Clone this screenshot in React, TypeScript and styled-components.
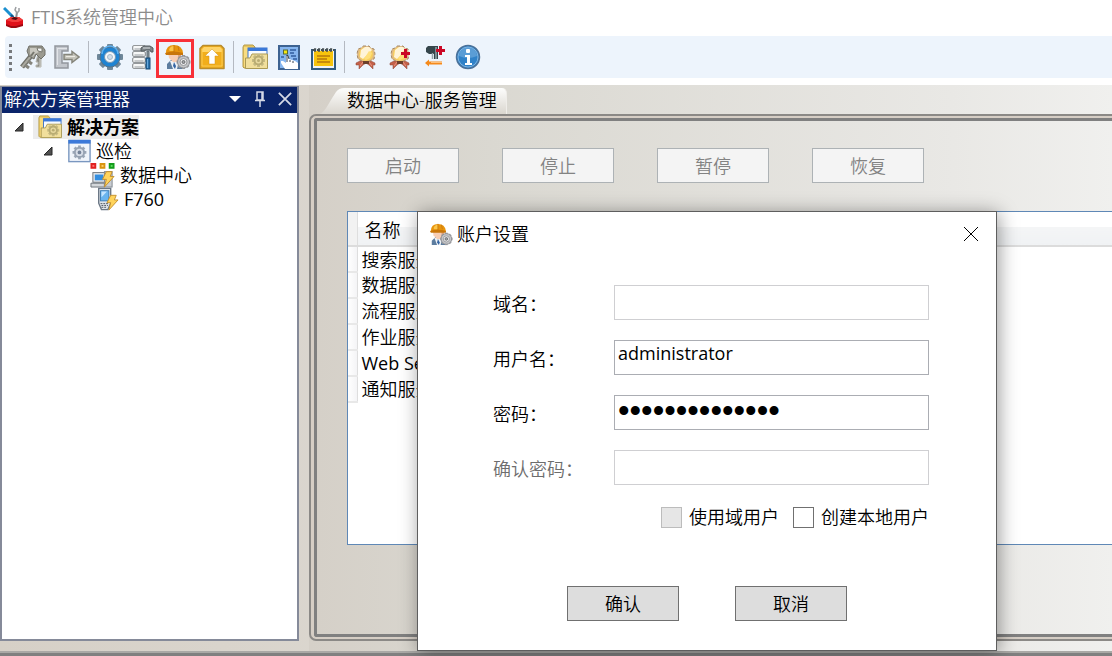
import React, { useState } from "react";
import styled, { createGlobalStyle } from "styled-components";

const GlobalStyle = createGlobalStyle`
  *, *::before, *::after { box-sizing: border-box; }
  body {
    margin: 0;
    background: #fff;
    color: #000;
    font-family: "Open Sans", "Noto Sans CJK SC", sans-serif;
    font-size: 18px;
    font-weight: 350;
    line-height: 24px;
  }
  button, input { font: inherit; color: inherit; }
`;

const Page = styled.div`
  display: flex;
  flex-direction: column;
  min-height: 100vh;
  overflow: hidden;
`;

const TitleBar = styled.header`
  display: flex;
  align-items: center;
  gap: 6px;
  height: 36px;
  padding: 0 3px 2px;
  color: #8c8c8c;
`;

const AppTitle = styled.h1`
  margin: 0;
  font-size: 18px;
  font-weight: 350;
`;

const Latin = styled.span`
  font-weight: 400;
`;

const Toolbar = styled.nav`
  display: flex;
  align-items: center;
  height: 42px;
  margin: 0 0 7px 5px;
  background: #edf4fc;
  border-radius: 4px 0 0 4px;
`;

const Grip = styled.span`
  width: 3px;
  height: 27px;
  margin: 0 4px;
  background: repeating-linear-gradient(#77797c 0 3px, transparent 3px 6px);
`;

const Separator = styled.span`
  width: 9px;
  height: 32px;
  background: linear-gradient(#b4b9c1, #b4b9c1) center / 1px 100% no-repeat;
`;

const ToolButton = styled.button<{ $marked?: boolean }>`
  position: relative;
  display: flex;
  align-items: center;
  justify-content: center;
  width: 34px;
  height: 36px;
  padding: 0;
  border: 0;
  background: none;
  &::after {
    content: "";
    display: ${(p) => (p.$marked ? "block" : "none")};
    position: absolute;
    inset: 0 1px -3px -5px;
    border: 3px solid #f83038;
  }
`;

const Workspace = styled.div`
  flex: 1;
  display: flex;
  gap: 10px;
  background: linear-gradient(90deg, #d6d0c7, #e5e4e0);
`;

const StatusBar = styled.footer`
  height: 5px;
  background: #808080;
  border-top: 2px solid #aaa9a6;
`;

const SidePanel = styled.aside`
  flex: none;
  display: flex;
  flex-direction: column;
  width: 299px;
  margin: 1px 0 10px;
  border: 2px solid #858a99;
  border-top-width: 1px;
  background: #fff;
`;

const PanelHeader = styled.div`
  display: flex;
  align-items: center;
  height: 26px;
  padding: 0 0 2px 2px;
  background: #0a246a;
  color: #fff;
`;

const PanelTitle = styled.h2`
  flex: 1;
  margin: 0;
  font-size: 18px;
  font-weight: 350;
`;

const PanelButton = styled.button`
  display: flex;
  align-items: center;
  justify-content: center;
  width: 25px;
  height: 24px;
  padding: 0;
  border: 0;
  background: none;
`;

const Tree = styled.ul`
  margin: 0;
  padding: 2px 0;
  list-style: none;
`;

const TreeRow = styled.li<{ $indent: number }>`
  display: flex;
  align-items: center;
  height: 24px;
  padding-left: ${(p) => p.$indent}px;
`;

const Caret = styled.span`
  display: flex;
  width: 19px;
`;

const TreeLabel = styled.span<{ $selected?: boolean }>`
  display: flex;
  align-items: center;
  gap: 5px;
  padding-left: 5px;
  background: ${(p) => (p.$selected ? "#ececec" : "none")};
  font-weight: ${(p) => (p.$selected ? 700 : 350)};
`;

const MainArea = styled.main`
  flex: 1;
  min-width: 0;
  display: flex;
  flex-direction: column;
  padding-bottom: 10px;
  background: linear-gradient(90deg, #d5d0c8, #dad8d1 22%, #e9e8e5 80%, #f0f0ee);
`;

const TabStrip = styled.div`
  display: flex;
  height: 29px;
  padding: 3px 0 0 11px;
`;

const Tab = styled.button`
  display: flex;
  padding: 0;
  border: 0;
  background: none;
`;

const TabText = styled.span`
  height: 26px;
  padding: 0 9px 0 3px;
  background: linear-gradient(#fdfdfc, #dad6cf);
  border-right: 1px solid #efede9;
  border-radius: 0 5px 0 0;
`;

const OuterFrame = styled.section`
  flex: 1;
  display: flex;
  padding: 2px 0 2px 3px;
  border: 2px solid #8b8986;
  border-right: 0;
  border-radius: 7px 0 0 7px;
  background: #d6cec5;
`;

const InnerFrame = styled.div`
  flex: 1;
  min-width: 0;
  display: flex;
  flex-direction: column;
  gap: 28px;
  padding: 27px 0 89px 30px;
  border: 3px solid #808080;
  border-right: 0;
  border-radius: 3px 0 0 3px;
  background: linear-gradient(90deg, #d5d0c8, #dad8d1 22%, #e9e8e5 80%, #f0f0ee);
`;

const Actions = styled.div`
  display: flex;
  gap: 43px;
`;

const Button = styled.button`
  width: 112px;
  height: 35px;
  padding: 0;
  border: 1px solid #707070;
  background: #ddd;
  &:disabled {
    border-color: #adb2b5;
    background: #f4f4f4;
    color: #838383;
  }
`;

const GridBox = styled.div`
  flex: 1;
  border: 1px solid #5f88b6;
  border-right: 0;
  background: #fff;
`;

const ServiceTable = styled.table`
  width: 100%;
  border-collapse: collapse;
  th, td { padding: 0 0 0 4px; text-align: left; font-weight: 350; }
  th { height: 34px; padding: 2px 0 0 7px; border-bottom: 2px solid #dcdcdc; background: linear-gradient(#fff 44%, #f4f5f6 44%, #f0f2f4); }
  td { height: 26px; }
  th:first-child, td:first-child { width: 9px; padding: 0; border-right: 1px solid #dedede; }
  th:first-child { background: #f2f2f2; }
  td:first-child { border-bottom: 2px solid #e8e8e8; background: linear-gradient(90deg, #fff, #f4f4f6); }
`;

const Dialog = styled.div`
  position: absolute;
  left: 417px;
  top: 211px;
  width: 580px;
  border: 1px solid #5e5e5e;
  background: #fff;
  box-shadow: 2px 2px 18px rgba(0, 0, 0, 0.4);
`;

const DialogHeader = styled.div`
  display: flex;
  align-items: center;
  gap: 4px;
  height: 44px;
  padding: 0 15px 0 12px;
`;

const DialogTitle = styled.h2`
  flex: 1;
  margin: 0;
  font-size: 18px;
  font-weight: 350;
`;

const CloseButton = styled(PanelButton)`
  width: 20px;
`;

const Form = styled.form`
  display: flex;
  flex-direction: column;
  gap: 20px;
  padding: 29px 67px 29px 75px;
`;

const Field = styled.label<{ $muted?: boolean }>`
  display: flex;
  align-items: center;
  color: ${(p) => (p.$muted ? "#6d6d6d" : "#000")};
`;

const FieldName = styled.span`
  width: 121px;
  padding-top: 2px;
`;

const TextInput = styled.input`
  flex: 1;
  min-width: 0;
  height: 35px;
  padding: 0 3px 10px;
  border: 1px solid #abadb3;
  border-radius: 0;
  background: #fff;
  outline: 0;
  font-weight: 400;
  &:disabled { border-color: #cfcfd2; }
  &[type="password"] {
    padding: 0 3px 4px;
    font-family: "Liberation Sans", sans-serif;
    font-size: 33px;
  }
`;

const Checks = styled.div`
  display: flex;
  justify-content: flex-end;
  gap: 14px;
`;

const Check = styled.label`
  display: flex;
  align-items: center;
  gap: 7px;
`;

const CheckBox = styled.input`
  appearance: none;
  width: 21px;
  height: 21px;
  margin: 0;
  border: 1px solid #707070;
  background: #fff;
  &:disabled { border-color: #bcbcbc; background: #e6e6e6; }
`;

const DialogActions = styled.div`
  display: flex;
  justify-content: center;
  gap: 56px;
  padding: 37px 8px 0 0;
`;

const Icon = ({ size = 26, children }: { size?: number; children: React.ReactNode }) => (
  <svg width={size} height={size} viewBox="0 0 26 26" fill="none" aria-hidden="true">
    {children}
  </svg>
);

const LogoIcon = () => (
  <svg width="22" height="22" viewBox="0 0 22 22" fill="none" aria-hidden="true">
    <path d="M1 2l9 9" stroke="#1b8fd0" strokeWidth="3" />
    <path d="M8 9l4 4" stroke="#174f7d" strokeWidth="2" />
    <path d="M13 13l1-7" stroke="#8c8f92" strokeWidth="2" />
    <path d="M13 1l-1 3 2 3 2-2V2" stroke="#9c9fa2" strokeWidth="1.500" />
    <path d="M3 14l5-3h8l4 3v5l-7 2H8l-5-2z" fill="#e01019" />
    <path d="M3 14l6 2h6l5-2-4-3H8z" fill="#f23c3c" />
    <path d="M8 13l3-2 4 1-2 2z" fill="#4e0a0e" />
    <path d="M3 18l5 2h5l7-2v2l-7 2H8l-5-2z" fill="#9d0810" />
  </svg>
);

const KeyIcon = () => (
  <Icon>
    <path d="M18 10l3 1v12h-5v-2h2v-3h-2z" fill="#8c8c84" stroke="#b5b5ae" />
    <path d="M20 11v13" stroke="#d6d6d0" />
    <path d="M11 12L2 23" stroke="#6f6f68" strokeWidth="5" />
    <path d="M11 12L2 23" stroke="#aaa9a0" strokeWidth="2" />
    <path d="M5 21l4 3M8 17l4 3" stroke="#85847c" strokeWidth="3" />
    <path d="M9 2h13l3 4v5l-4 4-5-5-2 5-5-3-2-5z" fill="#9b9a90" stroke="#707069" />
    <path d="M10 4h9l2 3-6 3-2 3-3-3z" fill="#c9c8c0" />
    <path d="M17 4h5v4l-4-1z" fill="#f3f4f3" stroke="#77776e" />
    <path d="M14 8l-3 4" stroke="#77776e" strokeWidth="2" />
  </Icon>
);

const ExitIcon = () => (
  <Icon>
    <path d="M14 2H1v22h13v-5H8V7h6z" fill="#c2c6cc" stroke="#92969d" strokeWidth="1.500" />
    <path d="M3 4.500h10M3.500 5v16" stroke="#e2e4e8" strokeWidth="1" />
    <path d="M10 10.500h8V7.500l7 5.500-7 5.500v-3h-8z" fill="#c7c6bd" stroke="#85857b" strokeWidth="1.500" />
    <path d="M12 12.500h9" stroke="#ecebe3" />
  </Icon>
);

const teeth = Array.from({ length: 8 }, (_, i) => i * 45);

const GearIcon = () => (
  <Icon>
    {teeth.map((a) => (
      <rect key={a} x="10" y="0" width="6" height="6" rx="1" fill="#6f8799" transform={`rotate(${a} 13 13)`} />
    ))}
    <circle cx="13" cy="13" r="10.500" fill="#56748c" />
    <circle cx="13" cy="13" r="9.500" fill="#1e83d2" />
    <path d="M5 10a8 8 0 0116 0" stroke="#5fb0ee" strokeWidth="1.500" />
    <circle cx="13" cy="13" r="5.500" fill="#f3f7fa" stroke="#7797b2" strokeWidth="1" />
    <circle cx="13" cy="13" r="2.500" fill="#d0deea" stroke="#a3b8ca" />
  </Icon>
);

const ServerIcon = () => (
  <Icon>
    {[1, 7, 13, 19].map((y) => (
      <g key={y}>
        <rect x="1.500" y={y + 0.5} width="13" height="5" rx="1.500" fill="#dcdedf" stroke="#94989b" />
        <path d={`M3 ${y + 2}h10`} stroke="#fff" strokeWidth="1.500" />
        <path d={`M4 ${y + 4}h8`} stroke="#b2b6b9" />
      </g>
    ))}
    <path d="M10 4l3-2h6l3 2v4h-2l-1-2h-4l-2 1h-3z" fill="#7e8589" stroke="#555c60" />
    <path d="M12 4h7" stroke="#d7dbdd" />
    <rect x="16" y="7" width="2" height="8" fill="#8b979e" stroke="#5f6a70" />
    <rect x="15" y="14" width="4" height="11" fill="#2a72ad" stroke="#174a77" />
    <path d="M16.500 15v9" stroke="#68a8dc" />
  </Icon>
);

const WorkerIcon = ({ size = 26 }: { size?: number }) => (
  <Icon size={size}>
    <path d="M2 25v-5l4-4h7l4 3v6z" fill="#5d7d9f" />
    <path d="M5 17l3 8h4l2-8z" fill="#eef2f6" />
    <path d="M9 18l-1 4 2 3 1-3z" fill="#3465a4" />
    <path d="M3 8h13v5l-3 5H8l-4-4z" fill="#f7cdb4" />
    <path d="M13 9h3v4l-3 4z" fill="#dfa27f" />
    <path d="M1 9q0-8 8-8 8 0 9 8v1H1z" fill="#e8940c" />
    <path d="M4 6q1-4 5-4v5H5z" fill="#fbc64a" />
    <path d="M9 1v7M13 2l1 5" stroke="#c97a12" />
    <path d="M0 9q9-3 18 0v2H1z" fill="#c8760b" />
    {teeth.map((a) => (
      <rect key={a} x="17" y="11" width="3" height="4" fill="#9b9ca0" transform={`rotate(${a} 18.500 18)`} />
    ))}
    <circle cx="18.500" cy="18" r="6" fill="#c4c5c8" stroke="#8d8e92" />
    <circle cx="18.500" cy="18" r="3.500" fill="#ededee" stroke="#97989c" />
    <circle cx="18.500" cy="18" r="1.500" fill="#a2a3a7" stroke="#6c6e71" />
  </Icon>
);

const UploadIcon = () => (
  <Icon>
    <path d="M4 1.500h18l3 3v20H1v-20z" fill="#f2ae1b" stroke="#b98c2c" strokeWidth="1.500" strokeLinejoin="round" />
    <path d="M3 5l2-2h16l2 2v3H3z" fill="#ffd467" />
    <path d="M3 5v17h20V5" stroke="#fbcb55" />
    <path d="M13 5l7 7h-4v8h-6v-8H6z" fill="#fff" stroke="#d4921a" strokeWidth="0.500" />
  </Icon>
);

const FolderIcon = ({ size = 26 }: { size?: number }) => (
  <Icon size={size}>
    <path d="M1 23V3l1-2h9l2 2v5h11v16H2z" fill="#e9c65e" stroke="#b59c4c" />
    <rect x="2" y="3" width="4" height="20" fill="#f8dc80" />
    <rect x="6" y="4" width="19" height="19" fill="#f7fbff" stroke="#3b72ca" />
    <rect x="6" y="4" width="19" height="3" fill="#3b78d8" />
    <path d="M3.500 24.500V14H8l2-4h15.500v14.500z" fill="#f1df9c" stroke="#ab9a54" />
    {teeth.map((a) => (
      <rect key={a} x="15" y="10" width="3" height="4" fill="#c6ba82" transform={`rotate(${a} 16.500 16.500)`} />
    ))}
    <circle cx="16.500" cy="16.500" r="4" fill="#e8daa0" stroke="#b9ac72" strokeWidth="2" />
    <circle cx="16.500" cy="16.500" r="1.500" fill="#b9ac72" />
  </Icon>
);

const CardIcon = () => (
  <Icon>
    <rect x="3" y="2" width="20" height="23" fill="#85b5ef" stroke="#3d6291" strokeWidth="2" />
    <rect x="7.500" y="6" width="4" height="4" fill="#f4e711" stroke="#566a3a" />
    <path d="M14 6h6M14 9h4M15 12h5M5 13h3M17 15h4" stroke="#315da0" strokeWidth="1.500" />
    <path d="M10 12v7l-3-2H5v2l4 6h13v-6l-3-2-3-1-3-1v-3z" fill="#fff" />
    <path d="M11 11.500V18M13 15l-1-3.500h-1.500M14 16v2M17 17v2" stroke="#394252" />
  </Icon>
);

const NotepadIcon = () => (
  <Icon>
    <rect x="2" y="6" width="23" height="19" fill="#eef3f6" stroke="#315a80" strokeWidth="2" />
    <rect x="4" y="7" width="19" height="15" fill="#f7c30d" />
    <path d="M2 6h23" stroke="#43525c" strokeWidth="2" />
    <path d="M5 4v4M9 4v4M13 4v4M17 4v4M21 4v4" stroke="#4a5155" strokeWidth="1.500" />
    <path d="M6.500 4v3M10.500 4v3M14.500 4v3M18.500 4v3M22.500 4v3" stroke="#d8dfdf" />
    <path d="M7 12h13M7 15h10M7 18h13" stroke="#b7790c" strokeWidth="1.500" />
  </Icon>
);

const RedCross = () => <path d="M17 5h3v3h3v3h-3v3h-3v-3h-3V8h3z" fill="#cb0725" />;

const MedalIcon = ({ plus }: { plus?: boolean }) => (
  <Icon>
    <path d="M7 17l-4 2v2h3v4l4-4 3-2 3 2 4 4v-4h2v-2l-4-2z" fill="#c4614a" stroke="#8a4434" strokeWidth="0.500" />
    <path d="M10 18l-3 4M16 18l3 4" stroke="#eb9580" />
    <path d="M10 2h6l2 2 3 1 1 5-1 5-4 2-4 1-4-1-4-2-1-5 1-5 3-1z" fill="#e0bb84" stroke="#a78b68" strokeDasharray="3 2" />
    <circle cx="13" cy="10" r="7" fill="#f9d05c" />
    <path d="M8 6l4-3h4l3 3-9 9-3-2z" fill="#fff4d8" />
    <path d="M16 7l3 2-2 5-4 2-2-1z" fill="#ffe07b" />
    <path d="M10 17h6v3h-6z" fill="#6b3f2b" />
    {plus && <RedCross />}
  </Icon>
);

const TextToolIcon = () => (
  <Icon>
    <path d="M7 2h10v13h-4v-5H8L5 8V4z" fill="#35454b" />
    <path d="M11.500 9v6M15 3v12" stroke="#93a4aa" strokeWidth="1.500" />
    <path d="M18 2h3v3h3v3h-3v3h-3V8h-3V5h3z" fill="#cb0725" />
    <path d="M4 19l4-3.500v2h13v3H8v2z" fill="#f58a1c" />
    <path d="M10 18.500h11" stroke="#ffc079" />
  </Icon>
);

const InfoIcon = () => (
  <Icon>
    <circle cx="13" cy="13" r="11.500" fill="#3082c8" stroke="#4a7199" strokeWidth="1.500" />
    <path d="M4 12a9 9 0 0118 0q-9 4-18 0z" fill="#5a9dd6" />
    <circle cx="13" cy="13" r="10" stroke="#7fb5e2" />
    <rect x="11" y="5" width="4" height="4" rx="1" fill="#fff" />
    <path d="M10 11h5v8h2v2h-7v-2h2v-6h-2z" fill="#fff" />
  </Icon>
);

const WindowGearIcon = () => (
  <Icon size={24}>
    <rect x="2" y="1.500" width="23" height="23" fill="#f0f5fb" stroke="#7a97c0" strokeWidth="1.500" />
    <rect x="1.500" y="1" width="24" height="4" fill="#3b79d9" />
    {teeth.map((a) => (
      <rect key={a} x="12" y="7" width="3" height="4" fill="#9ba7b7" transform={`rotate(${a} 13.500 14.500)`} />
    ))}
    <circle cx="13.500" cy="14.500" r="5" fill="#d6dde7" stroke="#97a3b3" strokeWidth="2" />
    <circle cx="13.500" cy="14.500" r="2" fill="#75849a" />
  </Icon>
);

const Bolt = () => (
  <path d="M17 9h6l-2 5h4L15 25l2-8h-4z" fill="#ffd45c" stroke="#c4902d" strokeLinejoin="round" />
);

const DataCenterIcon = () => (
  <Icon size={25}>
    <rect x="1.500" y="1" width="4" height="4" fill="#ff7070" stroke="#e02020" strokeWidth="2" />
    <rect x="11" y="1" width="4" height="4" fill="#ffd070" stroke="#d89410" strokeWidth="2" />
    <rect x="20.500" y="1" width="4" height="4" fill="#60e060" stroke="#149c1c" strokeWidth="2" />
    <rect x="3" y="10" width="13" height="10" fill="#e6e9ed" stroke="#6b7279" />
    <rect x="5" y="12" width="9" height="6" fill="#338ee0" />
    <path d="M1 21h14v4H1z" fill="#d4d7da" stroke="#6b7279" />
    <rect x="15" y="9" width="8" height="16" fill="#c9cdd2" stroke="#808890" />
    <Bolt />
  </Icon>
);

const DeviceIcon = () => (
  <Icon size={24}>
    <path d="M4 1.500h13v16l-3 7H7l-3-7z" fill="#dfe4ea" stroke="#6c7886" strokeWidth="1.500" />
    <rect x="6" y="4" width="9" height="11" fill="#69b4ef" stroke="#3b7cb5" />
    <path d="M7 5h6l-6 6z" fill="#c3e4ff" />
    <path d="M6 18h8M7 20h7M7 22h6" stroke="#4c545d" strokeDasharray="2 1" />
    <Bolt />
  </Icon>
);

const CaretIcon = () => (
  <svg width="10" height="10" viewBox="0 0 10 10" aria-hidden="true">
    <path d="M9 1v8H1z" fill="#505050" stroke="#262626" />
  </svg>
);

const CrossIcon = ({ size, color, weight }: { size: number; color: string; weight: number }) => (
  <svg width={size} height={size} viewBox="0 0 16 16" aria-hidden="true">
    <path d="M1 1l14 14M15 1L1 15" stroke={color} strokeWidth={weight} />
  </svg>
);

type Tool = { label: string; icon: React.ReactNode; marked?: boolean };

const toolGroups: Tool[][] = [
  [
    { label: "登录", icon: <KeyIcon /> },
    { label: "退出", icon: <ExitIcon /> },
  ],
  [
    { label: "系统设置", icon: <GearIcon /> },
    { label: "数据库设置", icon: <ServerIcon /> },
    { label: "账户设置", icon: <WorkerIcon />, marked: true },
    { label: "上传", icon: <UploadIcon /> },
  ],
  [
    { label: "解决方案", icon: <FolderIcon /> },
    { label: "选择", icon: <CardIcon /> },
    { label: "日志", icon: <NotepadIcon /> },
  ],
  [
    { label: "许可证", icon: <MedalIcon /> },
    { label: "添加许可证", icon: <MedalIcon plus /> },
    { label: "文本", icon: <TextToolIcon /> },
    { label: "关于", icon: <InfoIcon /> },
  ],
];

const services: React.ReactNode[] = [
  "搜索服务",
  "数据服务",
  "流程服务",
  "作业服务",
  <Latin key="web">Web Service</Latin>,
  "通知服务",
];

export default function App() {
  const [user, setUser] = useState("administrator");
  const [password, setPassword] = useState("administrator1");

  return (
    <Page>
      <GlobalStyle />
      <TitleBar>
        <LogoIcon />
        <AppTitle><Latin>FTIS</Latin>系统管理中心</AppTitle>
      </TitleBar>

      <Toolbar>
        <Grip />
        {toolGroups.map((group, i) => (
          <React.Fragment key={i}>
            {i > 0 && <Separator />}
            {group.map((tool) => (
              <ToolButton key={tool.label} type="button" aria-label={tool.label} $marked={tool.marked}>
                {tool.icon}
              </ToolButton>
            ))}
          </React.Fragment>
        ))}
      </Toolbar>

      <Workspace>
        <SidePanel>
          <PanelHeader>
            <PanelTitle>解决方案管理器</PanelTitle>
            <PanelButton type="button" aria-label="菜单">
              <svg width="12" height="6" viewBox="0 0 12 6"><path d="M0 0h12L6 6z" fill="#fff" /></svg>
            </PanelButton>
            <PanelButton type="button" aria-label="固定">
              <svg width="12" height="16" viewBox="0 0 12 16">
                <path d="M3 1h6v8H3zM1 9.500h10M6 10v6M8 1v8" fill="none" stroke="#d5d9e6" strokeWidth="1.500" />
              </svg>
            </PanelButton>
            <PanelButton type="button" aria-label="关闭面板">
              <CrossIcon size={14} color="#d5d9e6" weight={2} />
            </PanelButton>
          </PanelHeader>
          <Tree>
            <TreeRow $indent={12}>
              <Caret><CaretIcon /></Caret>
              <TreeLabel $selected><FolderIcon size={24} />解决方案</TreeLabel>
            </TreeRow>
            <TreeRow $indent={41}>
              <Caret><CaretIcon /></Caret>
              <TreeLabel><WindowGearIcon />巡检</TreeLabel>
            </TreeRow>
            <TreeRow $indent={83}>
              <TreeLabel><DataCenterIcon />数据中心</TreeLabel>
            </TreeRow>
            <TreeRow $indent={88}>
              <TreeLabel><DeviceIcon /><Latin>F760</Latin></TreeLabel>
            </TreeRow>
          </Tree>
        </SidePanel>

        <MainArea>
          <TabStrip>
            <Tab type="button">
              <svg width="24" height="26" viewBox="0 0 24 26" aria-hidden="true">
                <defs>
                  <linearGradient id="tabFill" x1="0" y1="0" x2="0" y2="1">
                    <stop offset="0" stopColor="#fdfdfc" />
                    <stop offset="1" stopColor="#dad6cf" />
                  </linearGradient>
                </defs>
                <path d="M0 26Q4 24 8 17T16 4Q19 0 24 0V26z" fill="url(#tabFill)" />
              </svg>
              <TabText>数据中心-服务管理</TabText>
            </Tab>
          </TabStrip>
          <OuterFrame>
            <InnerFrame>
              <Actions>
                {["启动", "停止", "暂停", "恢复"].map((label) => (
                  <Button key={label} type="button" disabled>{label}</Button>
                ))}
              </Actions>
              <GridBox>
                <ServiceTable>
                  <thead>
                    <tr><th /><th>名称</th></tr>
                  </thead>
                  <tbody>
                    {services.map((name, i) => (
                      <tr key={i}><td /><td>{name}</td></tr>
                    ))}
                  </tbody>
                </ServiceTable>
              </GridBox>
            </InnerFrame>
          </OuterFrame>
        </MainArea>
      </Workspace>
      <StatusBar />

      <Dialog role="dialog" aria-labelledby="dialog-title">
        <DialogHeader>
          <WorkerIcon size={23} />
          <DialogTitle id="dialog-title">账户设置</DialogTitle>
          <CloseButton type="button" aria-label="关闭">
            <CrossIcon size={16} color="#000" weight={1} />
          </CloseButton>
        </DialogHeader>
        <Form onSubmit={(e) => e.preventDefault()}>
          <Field>
            <FieldName>域名：</FieldName>
            <TextInput type="text" disabled />
          </Field>
          <Field>
            <FieldName>用户名：</FieldName>
            <TextInput type="text" value={user} onChange={(e) => setUser(e.target.value)} />
          </Field>
          <Field>
            <FieldName>密码：</FieldName>
            <TextInput type="password" value={password} onChange={(e) => setPassword(e.target.value)} />
          </Field>
          <Field $muted>
            <FieldName>确认密码：</FieldName>
            <TextInput type="password" disabled />
          </Field>
          <Checks>
            <Check><CheckBox type="checkbox" disabled />使用域用户</Check>
            <Check><CheckBox type="checkbox" />创建本地用户</Check>
          </Checks>
          <DialogActions>
            <Button type="submit">确认</Button>
            <Button type="button">取消</Button>
          </DialogActions>
        </Form>
      </Dialog>
    </Page>
  );
}
